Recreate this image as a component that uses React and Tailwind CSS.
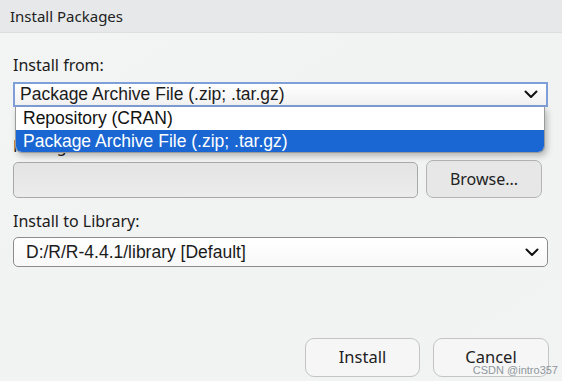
import React from "react";

const Chevron = () => (
  <svg width="14" height="9" viewBox="0 0 14 9" className="shrink-0">
    <polyline
      points="1.5,1.5 7,7 12.5,1.5"
      fill="none"
      stroke="#111"
      strokeWidth="2"
      strokeLinecap="round"
      strokeLinejoin="round"
    />
  </svg>
);

const App = () => {
  const ui = { fontFamily: '"Noto Sans", "Open Sans", sans-serif' };
  const arial = { fontFamily: '"Liberation Sans", Arial, sans-serif' };

  return (
    <div className="relative w-[562px] h-[381px] overflow-hidden bg-[#f2f3f3] text-[#1b1b1b]" style={ui}>
      {/* TITLE BAR */}
      <div className="h-[33px] bg-[#e6e8e9] border-b border-[#dcdedf] flex items-center pl-[10px] text-[15px] text-[#222]">
        Install Packages
      </div>

      <div className="px-[13px] bg-gradient-to-br from-[#f3f4f4] via-[#f1f2f2] to-[#f2f3f3]">
        {/* INSTALL FROM */}
        <div className="pt-[22px] h-[49px] text-[16px] leading-[20px]">Install from:</div>
        <div
          className="h-[25px] w-[535px] border-2 border-[#7f9fd8] bg-gradient-to-b from-white to-[#f1f1f1] flex items-center justify-between pl-[5px] pr-[8px] text-[17.5px]"
          style={arial}
        >
          <span>Package Archive File (.zip; .tar.gz)</span>
          <Chevron />
        </div>

        {/* PACKAGE ARCHIVE (behind dropdown) */}
        <div className="mt-[29px] h-[25px] text-[16px] leading-[20px]">Package archive:</div>
        <div className="mt-[1px] flex items-center gap-[8px]">
          <div className="w-[405px] h-[36px] rounded-[5px] border border-[#a8a8a8] bg-gradient-to-b from-[#e4e4e4] to-[#ececec]" />
          <button className="w-[116px] h-[38px] -mt-[2px] rounded-[7px] border border-[#b5b5b5] bg-[#e7e7e8] text-[16px] text-[#222]">
            Browse...
          </button>
        </div>

        {/* INSTALL TO LIBRARY */}
        <div className="mt-[13px] h-[26px] text-[16px] leading-[20px]">Install to Library:</div>
        <div
          className="h-[30px] w-[535px] rounded-[5px] border border-[#8c8c8c] bg-gradient-to-b from-white to-[#f8f8f8] flex items-center justify-between pl-[12px] pr-[8px] text-[17.5px]"
          style={arial}
        >
          <span>D:/R/R-4.4.1/library [Default]</span>
          <Chevron />
        </div>

        {/* BUTTONS */}
        <div className="mt-[71px] flex justify-end gap-[13px] pr-0">
          <button className="w-[115px] h-[39px] rounded-[9px] border border-[#c4c4c4] bg-[#f6f6f6] text-[16.5px] text-[#222]">
            Install
          </button>
          <button className="w-[116px] h-[39px] rounded-[9px] border border-[#c4c4c4] bg-[#f6f6f6] text-[16.5px] text-[#222]">
            Cancel
          </button>
        </div>
      </div>

      {/* OPEN DROPDOWN LIST */}
      <div
        className="absolute left-[15px] top-[107px] w-[530px] bg-white border border-t-0 border-[#9a9a9a] rounded-b-[7px] shadow-[2px_3px_6px_rgba(0,0,0,0.25)] overflow-hidden text-[17.5px]"
        style={arial}
      >
        <div className="h-[23px] leading-[23px] pl-[7px] text-[#111]">Repository (CRAN)</div>
        <div className="h-[22px] leading-[22px] pl-[7px] bg-[#1a67d3] text-white">Package Archive File (.zip; .tar.gz)</div>
      </div>

      {/* WATERMARK */}
      <div className="absolute right-[4px] bottom-[4px] text-[11px] leading-[13px] text-[#8f969c]" style={arial}>
        CSDN @intro357
      </div>
    </div>
  );
};

export default App;
